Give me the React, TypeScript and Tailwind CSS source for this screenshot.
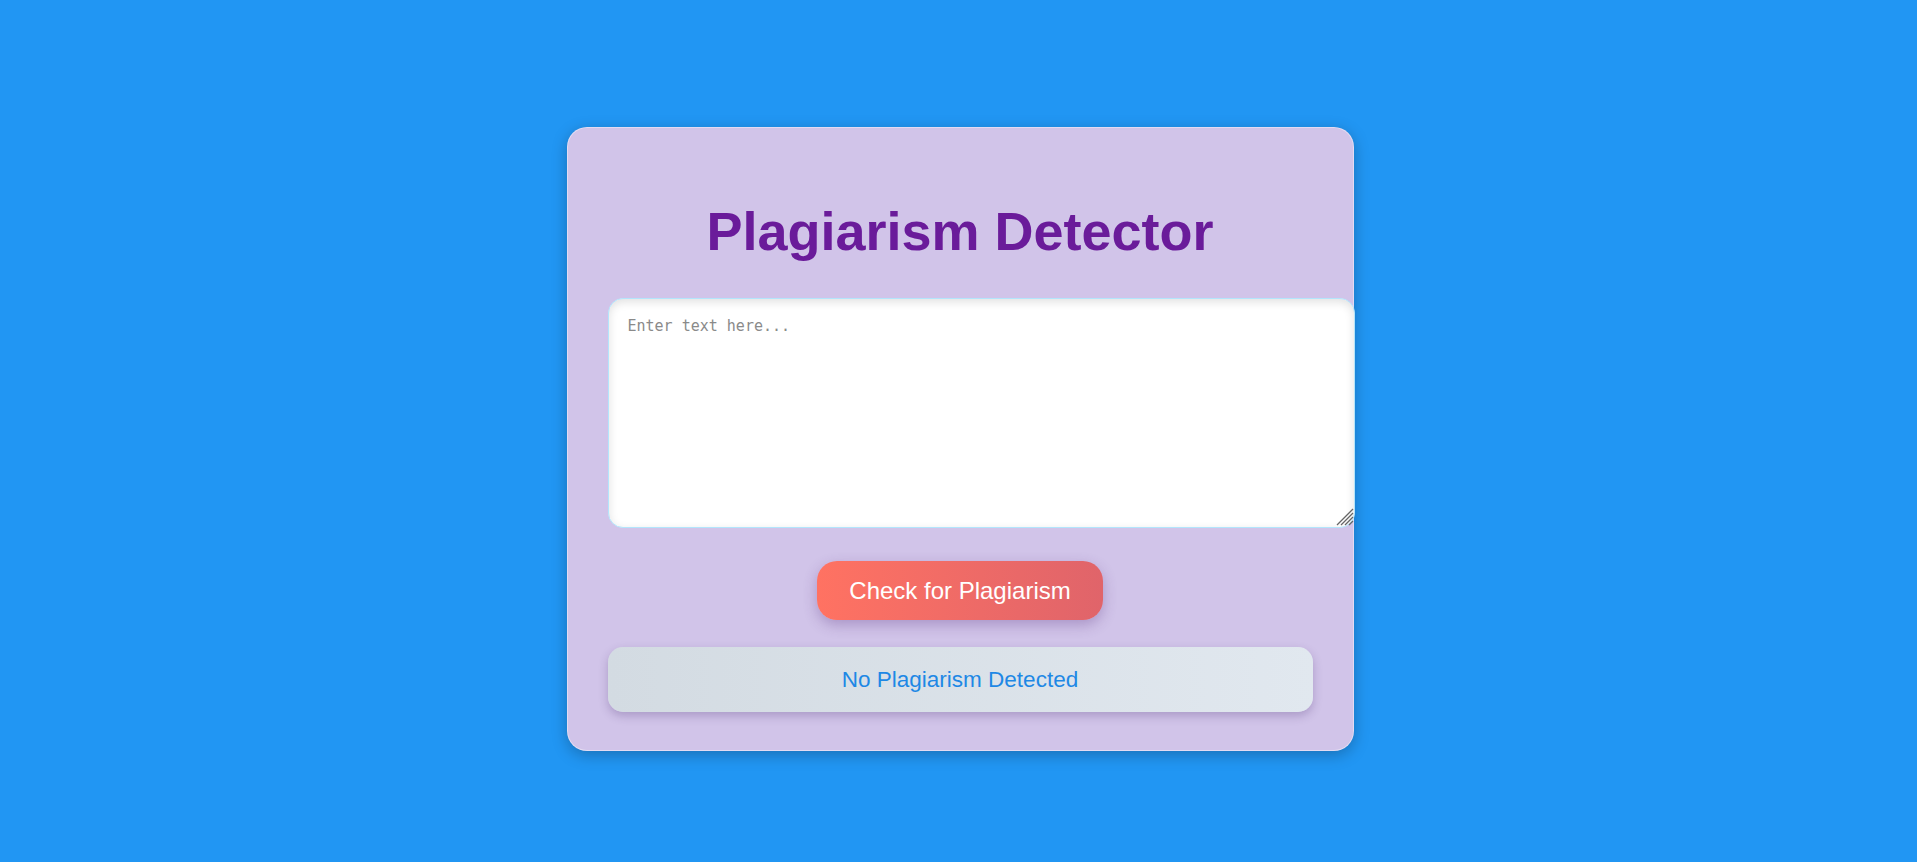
import { useState } from "react";

const App = () => {
  const [text, setText] = useState("");
  const [result, setResult] = useState("No Plagiarism Detected");

  // fake check, nothing to compare against
  const handleCheck = () => {
    setResult("No Plagiarism Detected");
  };

  return (
    <div className="min-h-screen w-full bg-[#2196f3] flex justify-center pt-[127px] font-['Liberation_Sans',Arial,sans-serif]">
      <div className="ml-[3px] w-[787px] h-[624px] rounded-[20px] bg-[#d1c4e9] border border-white/40 shadow-[0_4px_15px_rgba(0,0,0,0.25)] px-10 pt-[73px] pb-[38px] flex flex-col items-center">
        <h1 className="h-[60px] leading-[60px] text-[54px] font-bold text-[#6a1b9a] text-center">
          Plagiarism Detector
        </h1>
        <div className="relative self-start mt-[37px] w-[747px] h-[230px] shrink-0">
          <textarea
            value={text}
            onChange={(e) => setText(e.target.value)}
            placeholder="Enter text here..."
            className="block w-full h-full resize-none rounded-[15px] border border-[#b3e5fc] bg-white pl-[19px] pr-4 pt-[17px] text-[15px] leading-[20px] font-['DejaVu_Sans_Mono',monospace] text-gray-800 placeholder:text-[#8a8a8a] shadow-[inset_0_3px_10px_rgba(0,0,0,0.12)] outline-none"
          />
          {/* resize grip */}
          <svg
            className="absolute right-[1px] bottom-[2px] pointer-events-none"
            width="18"
            height="18"
            viewBox="0 0 18 18"
          >
            <g stroke="#666" strokeWidth="1.2">
              <line x1="17" y1="1" x2="1" y2="17" />
              <line x1="17" y1="5" x2="5" y2="17" />
              <line x1="17" y1="9" x2="9" y2="17" />
              <line x1="17" y1="13" x2="13" y2="17" />
            </g>
          </svg>
        </div>
        <button
          onClick={handleCheck}
          className="mt-[33px] w-[286px] h-[59px] shrink-0 rounded-[20px] bg-gradient-to-r from-[#ff7262] to-[#e0646a] text-white text-[24px] flex items-center justify-center shadow-[0_5px_14px_rgba(80,40,120,0.3)]"
        >
          Check for Plagiarism
        </button>
        <div className="mt-[27px] w-full h-[65px] shrink-0 rounded-[15px] bg-gradient-to-r from-[#d3dbe2] to-[#e1e8ef] shadow-[0_4px_10px_rgba(60,30,100,0.25)] flex items-center justify-center text-[22.5px] text-[#1e88e5]">
          {result}
        </div>
      </div>
    </div>
  );
};

export default App;
